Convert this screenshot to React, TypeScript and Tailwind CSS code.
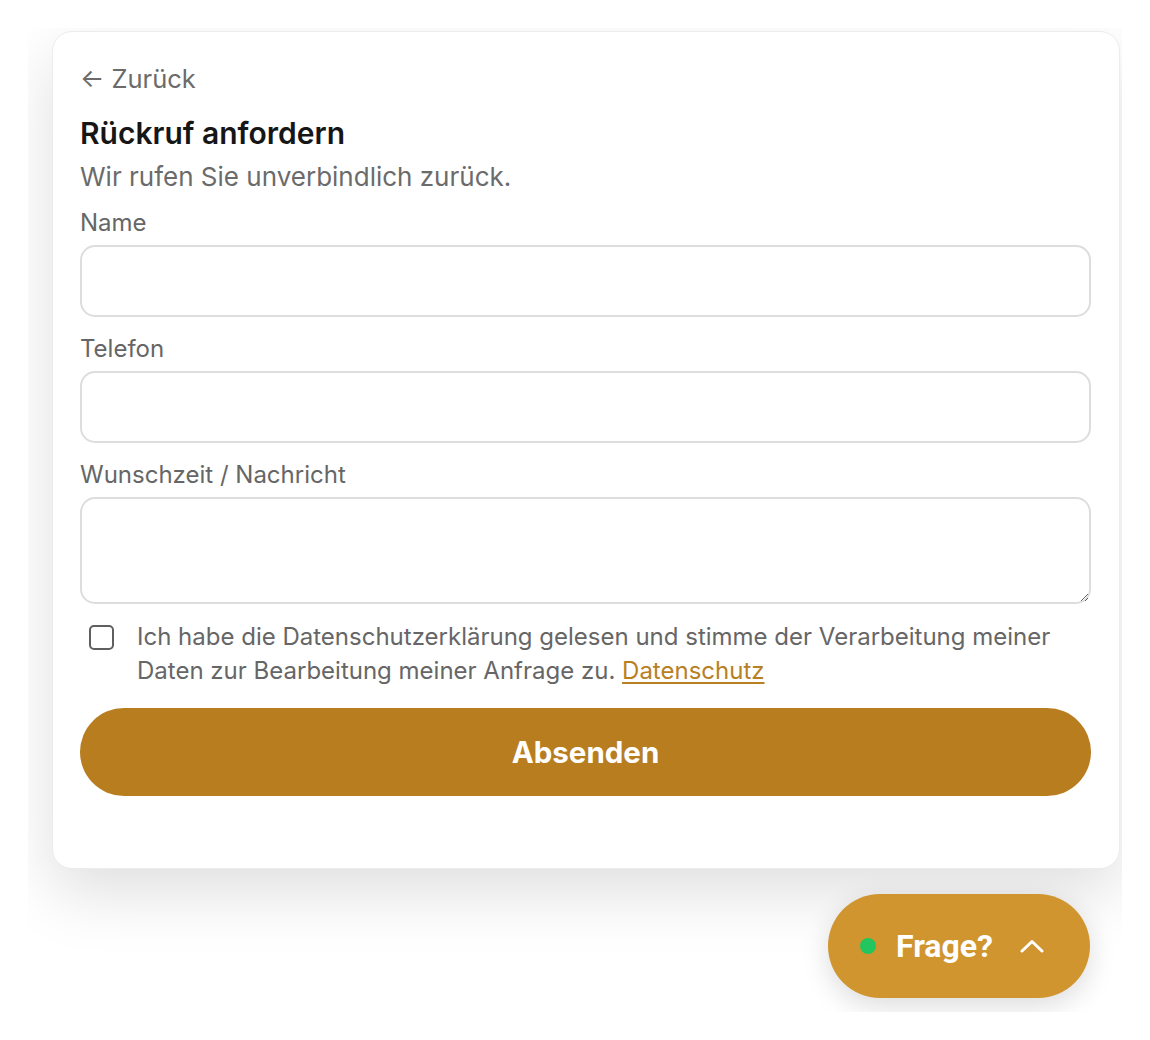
import { useState } from 'react';

const App = () => {
  const [name, setName] = useState('');
  const [phone, setPhone] = useState('');
  const [message, setMessage] = useState('');
  const [accepted, setAccepted] = useState(false);

  return (
    <div className="min-h-screen bg-white pt-[28px] pl-[28px]" style={{ fontFamily: 'Inter, "Noto Sans", sans-serif' }}>
      <div className="w-[1094px] h-[984px] overflow-hidden flex flex-col items-start pt-[3px] pl-[24px]">
        {/* Callback Card */}
        <div className="w-[1068px] h-[838px] bg-white border border-[#ececec] rounded-[20px] shadow-[0_24px_64px_rgba(0,0,0,0.13)] pl-[27px] pr-[28px] pt-[30px]">
          <button className="text-[25.5px] leading-[34px] text-[#6b6b6b]">← Zurück</button>

          <h2 className="mt-[19px] text-[30px] leading-[36px] font-semibold text-[#161616]">Rückruf anfordern</h2>
          <p className="mt-[10px] text-[26px] leading-[32px] text-[#6b6b6b]">Wir rufen Sie unverbindlich zurück.</p>

          <label className="block mt-[15px] text-[24px] leading-[30px] text-[#666]">Name</label>
          <input
            value={name}
            onChange={(e) => setName(e.target.value)}
            className="mt-[7px] block w-full h-[72px] rounded-[15px] border-2 border-[#dddddd] px-4 text-[22px] outline-none"
          />

          <label className="block mt-[17px] text-[24px] leading-[30px] text-[#666]">Telefon</label>
          <input
            value={phone}
            onChange={(e) => setPhone(e.target.value)}
            className="mt-[7px] block w-full h-[72px] rounded-[15px] border-2 border-[#dddddd] px-4 text-[22px] outline-none"
          />

          <label className="block mt-[17px] text-[24px] leading-[30px] text-[#666]">Wunschzeit / Nachricht</label>
          <textarea
            value={message}
            onChange={(e) => setMessage(e.target.value)}
            className="mt-[7px] block w-full h-[107px] rounded-[15px] border-2 border-[#dddddd] px-4 py-3 text-[22px] outline-none"
          />

          {/* Consent */}
          <label className="mt-[16px] flex items-start gap-[23px] pl-[9px] cursor-pointer">
            <input
              type="checkbox"
              checked={accepted}
              onChange={(e) => setAccepted(e.target.checked)}
              className="appearance-none mt-[5px] shrink-0 w-[25px] h-[25px] rounded-[5px] border-2 border-[#5f5f5f] bg-white"
            />
            <span className="text-[24px] leading-[34px] text-[#666]">
              Ich habe die Datenschutzerklärung gelesen und stimme der Verarbeitung meiner Daten zur Bearbeitung meiner Anfrage zu.{' '}
              <a href="#" className="text-[#b8801f] underline underline-offset-[3px]">Datenschutz</a>
            </span>
          </label>

          <button className="mt-[20px] w-full h-[88px] rounded-full bg-[#b87d1f] text-white text-[29.5px] font-bold">
            Absenden
          </button>
        </div>

        {/* Floating question button */}
        <div className="self-end mr-[32px] mt-[25px]">
          <button
            className="w-[262px] h-[104px] rounded-full bg-[#d0952e] shadow-[0_8px_28px_rgba(0,0,0,0.14)] flex items-center pl-[32px] text-white"
            style={{ fontFamily: 'Roboto, "Noto Sans", sans-serif' }}
          >
            <span className="w-[16px] h-[16px] rounded-full bg-[#22c55e]" />
            <span className="ml-[20px] text-[32px] font-bold leading-none">Frage?</span>
            <svg className="ml-[27px]" width="24" height="16" viewBox="0 0 24 16" fill="none">
              <path d="M2 13 L12 3.5 L22 13" stroke="white" strokeWidth="3" strokeLinecap="round" strokeLinejoin="round" />
            </svg>
          </button>
        </div>
      </div>
    </div>
  );
};

export default App;
